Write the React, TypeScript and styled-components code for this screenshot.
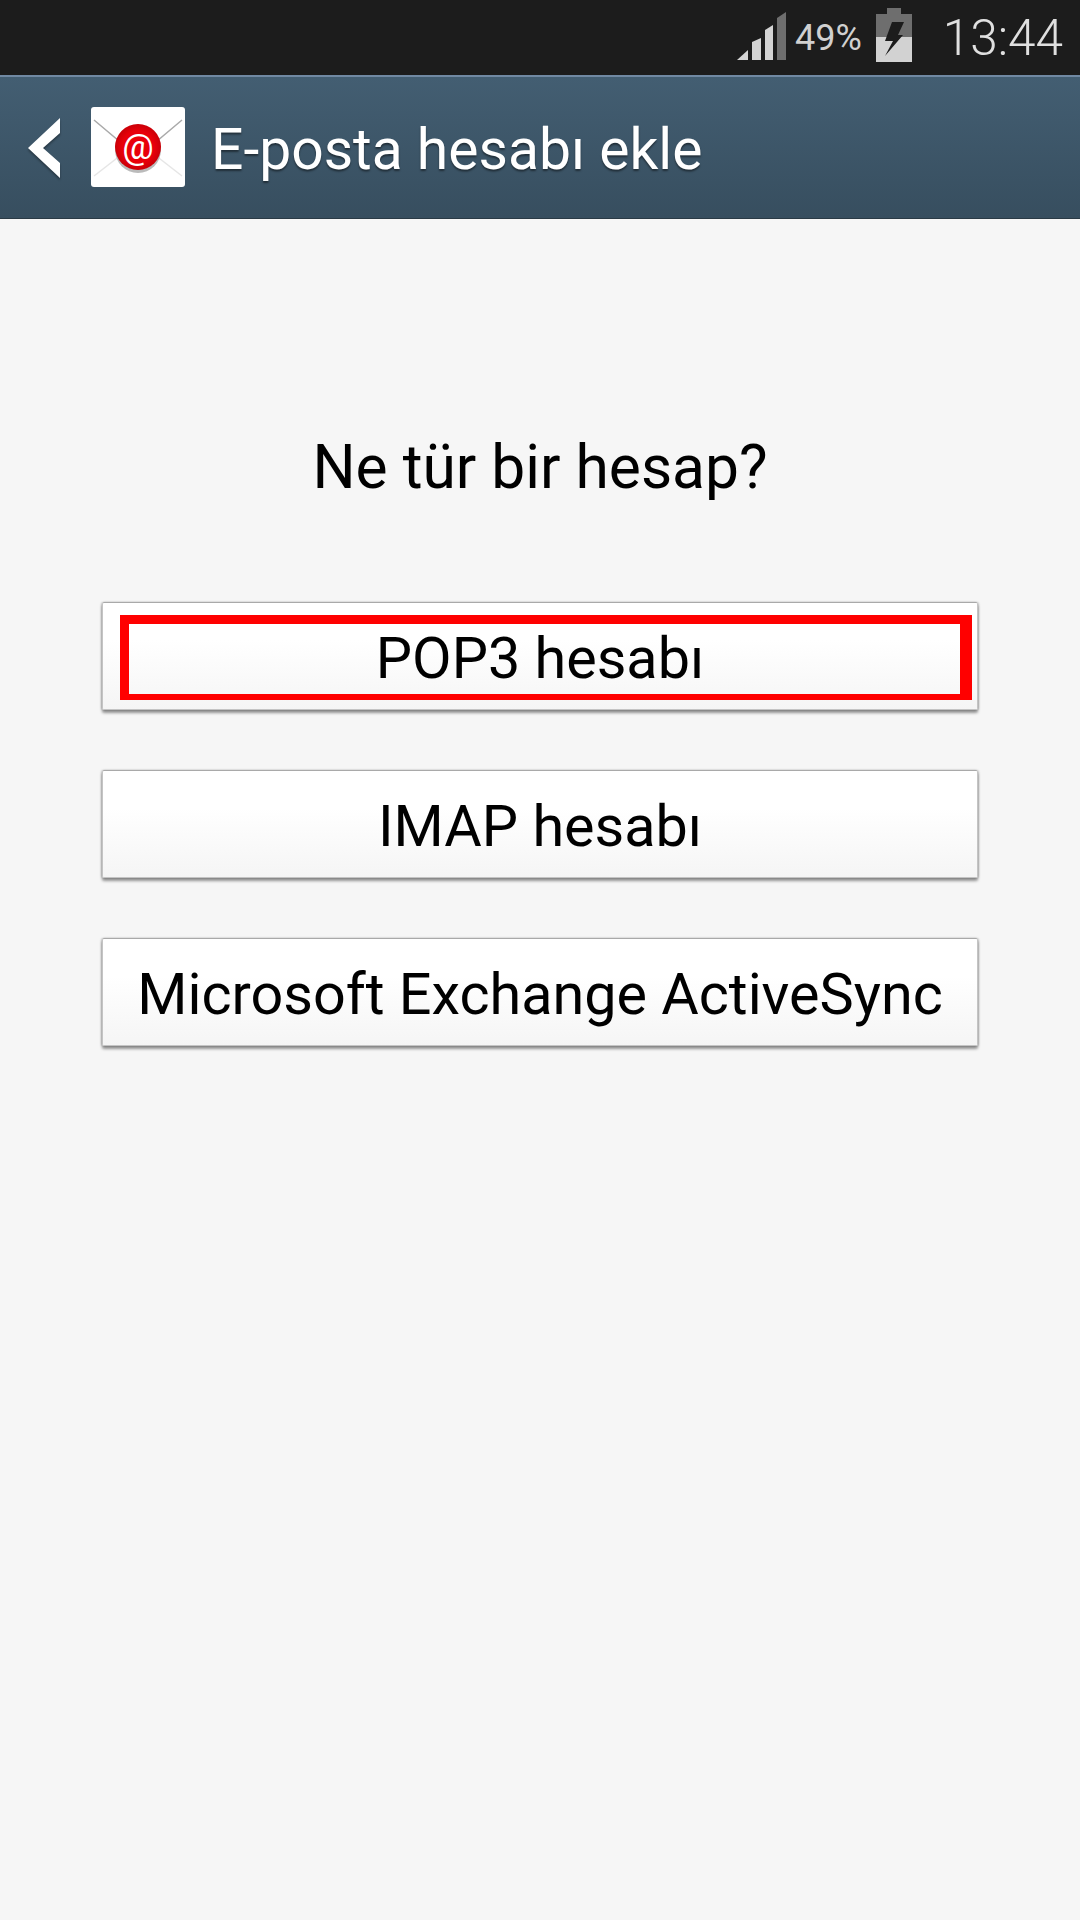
import styled, { createGlobalStyle } from "styled-components";

const GlobalStyle = createGlobalStyle`
  html, body {
    margin: 0;
    padding: 0;
    background: #f6f6f6;
  }
  * {
    box-sizing: border-box;
  }
`;

const Screen = styled.div`
  width: 1080px;
  height: 1920px;
  display: flex;
  flex-direction: column;
  background: #f6f6f6;
  font-family: Roboto, "Liberation Sans", sans-serif;
  overflow: hidden;
`;

const StatusBar = styled.div`
  height: 75px;
  flex-shrink: 0;
  display: flex;
  align-items: flex-start;
  justify-content: flex-end;
  background: #1c1c1c;
  color: #d2d2d2;
  padding: 10px 17px 0 0;
`;

const Percent = styled.span`
  font-size: 36px;
  line-height: 56px;
  margin: 0 14px 0 8px;
  color: #d0d0d0;
`;

const Clock = styled.span`
  font-size: 49.5px;
  line-height: 56px;
  font-weight: 300;
  margin-left: 31px;
  color: #e0e0e0;
`;

const SignalIcon = styled.svg`
  width: 50px;
  height: 52px;
  margin: 2px 0 0 0;
`;

const BatteryIcon = styled.svg`
  width: 36px;
  height: 56px;
  margin-top: -2px;
`;

const ActionBar = styled.div`
  height: 144px;
  flex-shrink: 0;
  display: flex;
  align-items: center;
  padding-left: 28px;
  background: linear-gradient(#435e72, #374e5f);
  border-top: 2px solid #7089a3;
  border-bottom: 1px solid #2a3a45;
`;

const BackIcon = styled.svg`
  width: 33px;
  height: 60px;
  margin-right: 30px;
  filter: drop-shadow(0 2px 1px rgba(0, 0, 0, 0.35));
`;

const MailIcon = styled.svg`
  width: 94px;
  height: 82px;
  margin-right: 26px;
`;

const Title = styled.h1`
  margin: 0;
  padding-top: 3px;
  font-size: 57px;
  font-weight: 400;
  color: #fff;
  text-shadow: 0 2px 2px rgba(0, 0, 0, 0.45);
`;

const Content = styled.div`
  flex: 1;
  display: flex;
  flex-direction: column;
  align-items: center;
  padding-top: 213px;
`;

const Question = styled.h2`
  margin: 0 0 98px;
  font-size: 60.5px;
  line-height: 72px;
  font-weight: 400;
  color: #000;
`;

const ButtonList = styled.div`
  display: flex;
  flex-direction: column;
  gap: 60px;
  width: 876px;
`;

const OptionButton = styled.button`
  position: relative;
  width: 100%;
  height: 108px;
  padding: 4px 0 0;
  border: 1px solid #c4c4c4;
  border-top-color: #a9a9a9;
  border-radius: 2px;
  background: linear-gradient(#ffffff 35%, #f5f5f5);
  box-shadow: 0 3px 3px rgba(0, 0, 0, 0.4), 1px 0 2px rgba(0, 0, 0, 0.18), -1px 0 2px rgba(0, 0, 0, 0.18);
  font-family: inherit;
  font-size: 57.5px;
  color: #000;
`;

const Highlight = styled.span`
  position: absolute;
  left: 17px;
  top: 12px;
  right: 5px;
  bottom: 9px;
  border: solid #ff0000;
  border-width: 9px 12px 6px 9px;
`;

const options = [
  { label: "POP3 hesabı", marked: true },
  { label: "IMAP hesabı", marked: false },
  { label: "Microsoft Exchange ActiveSync", marked: false },
];

export default function App() {
  return (
    <Screen>
      <GlobalStyle />
      <StatusBar>
        <SignalIcon viewBox="0 0 50 52">
          <path d="M0 48 L11 38 V48 Z" fill="#d4d4d4" />
          <path d="M15 48 V30 L24 26 V48 Z" fill="#d4d4d4" />
          <path d="M28 48 V18 L36 13 V48 Z" fill="#d4d4d4" />
          <path d="M40 48 V6 L49 0 V48 Z" fill="#6e6e6e" />
        </SignalIcon>
        <Percent>49%</Percent>
        <BatteryIcon viewBox="0 0 36 56">
          <rect x="11" y="0" width="14" height="6" fill="#6e6e6e" />
          <rect x="0" y="6" width="36" height="23" fill="#6e6e6e" />
          <rect x="0" y="29" width="36" height="25" fill="#d2d2d2" />
          <path d="M16 14 H28 L22 27 H27 L9 48 L17 33 H9 Z" fill="#1c1c1c" />
        </BatteryIcon>
        <Clock>13:44</Clock>
      </StatusBar>
      <ActionBar>
        <BackIcon viewBox="0 0 33 60">
          <path d="M32 0 V15 L15 30 L32 45 V60 L0 30 Z" fill="#fff" />
        </BackIcon>
        <MailIcon viewBox="0 0 94 82">
          <defs>
            <radialGradient id="sealRed">
              <stop offset="70%" stopColor="#e8000a" />
              <stop offset="100%" stopColor="#c90008" />
            </radialGradient>
          </defs>
          <rect width="94" height="80" rx="3" fill="#fff" />
          <path d="M3 13 L47 50 L91 13" fill="none" stroke="#aaa" strokeWidth="1.5" />
          <path d="M3 69 L30 48 M91 69 L64 48" fill="none" stroke="#e6e6e6" strokeWidth="1.5" />
          <circle cx="47" cy="43" r="23" fill="#bbb" />
          <circle cx="47" cy="40" r="23" fill="url(#sealRed)" />
          <text
            x="47"
            y="52"
            textAnchor="middle"
            fontFamily="Roboto, sans-serif"
            fontSize="35"
            fontWeight="400"
            fill="#fff"
          >
            @
          </text>
        </MailIcon>
        <Title>E-posta hesabı ekle</Title>
      </ActionBar>
      <Content>
        <Question>Ne tür bir hesap?</Question>
        <ButtonList>
          {options.map((option) => (
            <OptionButton key={option.label}>
              {option.label}
              {option.marked && <Highlight />}
            </OptionButton>
          ))}
        </ButtonList>
      </Content>
    </Screen>
  );
}
